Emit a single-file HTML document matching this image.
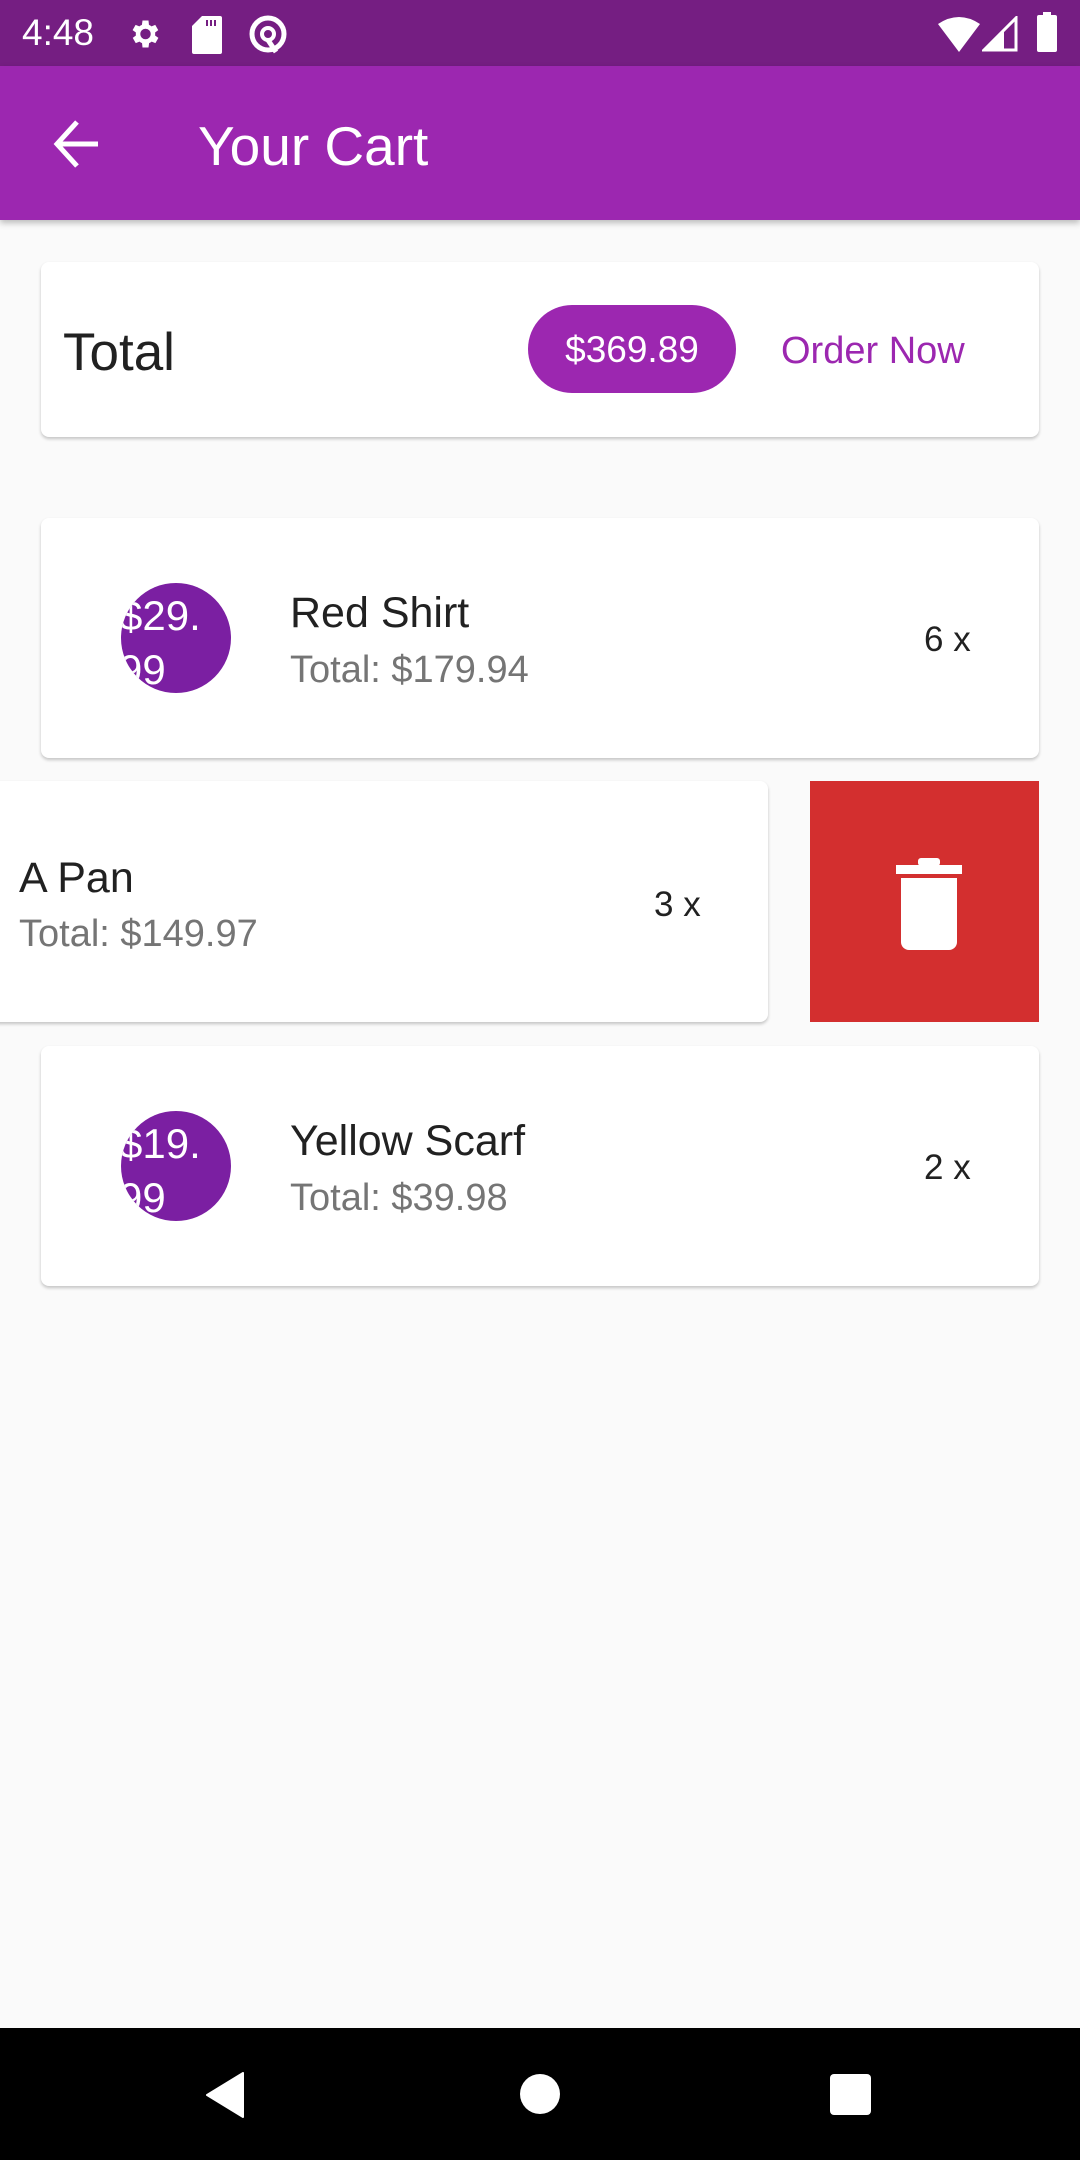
<!DOCTYPE html>
<html><head><meta charset="utf-8"><style>
*{margin:0;padding:0;box-sizing:border-box}
body{width:1080px;height:2160px;background:#fafafa;font-family:"Liberation Sans",sans-serif;position:relative;overflow:hidden}
.abs{position:absolute}
.card{position:absolute;background:#fff;border-radius:8px;box-shadow:0 2px 3px rgba(0,0,0,.22)}
.circ{position:absolute;width:110px;height:110px;border-radius:55px;background:#7b1fa2;overflow:hidden;color:#fff;font-size:42px;line-height:54px}
.name{position:absolute;font-size:43px;color:#212121;white-space:nowrap}
.tot{position:absolute;font-size:38px;color:#757575;white-space:nowrap}
.qty{position:absolute;font-size:35px;color:#212121;white-space:nowrap}
</style></head><body>
<div class="abs" style="left:0;top:0;width:1080px;height:66px;background:#751e82"></div>
<div class="abs" style="left:22px;top:12px;font-size:37px;color:#fff">4:48</div>
<svg class="abs" style="left:126px;top:14px" width="36" height="40" viewBox="0 0 24 24"><path fill="#fff" d="M19.4 13a7.5 7.5 0 000-2l2.1-1.6-2-3.5-2.5 1a7 7 0 00-1.7-1L15 3h-4l-.4 2.9a7 7 0 00-1.7 1l-2.5-1-2 3.5L6.6 11a7.5 7.5 0 000 2l-2.1 1.6 2 3.5 2.5-1a7 7 0 001.7 1L11 21h4l.4-2.9a7 7 0 001.7-1l2.5 1 2-3.5zM13 15.5a3.5 3.5 0 110-7 3.5 3.5 0 010 7z"/></svg>
<svg class="abs" style="left:192px;top:16px" width="30" height="38" viewBox="0 0 15 19"><path fill="#fff" d="M5 0h9a1 1 0 011 1v17a1 1 0 01-1 1H1a1 1 0 01-1-1V5z"/><path fill="#751e82" d="M7 2h1v3H7zM9 2h1v3H9zM11 2h1v3h-1z"/></svg>
<svg class="abs" style="left:248px;top:14px" width="40" height="40" viewBox="0 0 40 40"><circle cx="20" cy="20" r="16" fill="none" stroke="#fff" stroke-width="5"/><circle cx="20" cy="20" r="6" fill="none" stroke="#fff" stroke-width="4"/><path d="M20 26l8 12" stroke="#fff" stroke-width="5"/></svg>
<svg class="abs" style="left:938px;top:16px" width="42" height="36" viewBox="0 0 42 36"><path fill="#fff" d="M0 8Q21-6 42 8L21 36z"/></svg>
<svg class="abs" style="left:982px;top:16px" width="36" height="36" viewBox="0 0 36 36"><path fill="none" stroke="#fff" stroke-width="3" d="M2 34L34 2V34z"/><path fill="#fff" d="M2 34L22 14V34z"/></svg>
<div class="abs" style="left:1037px;top:15px;width:20px;height:37px;background:#fff;border-radius:2px"></div>
<div class="abs" style="left:1043px;top:12px;width:8px;height:4px;background:#fff"></div>
<div class="abs" style="left:0;top:66px;width:1080px;height:154px;background:#9c27b0;box-shadow:0 3px 6px rgba(0,0,0,.25)"></div>
<svg class="abs" style="left:52px;top:119px" width="48" height="50" viewBox="0 0 48 50"><path fill="none" stroke="#fff" stroke-width="5" d="M46 25H6M25 3L5 25l20 22"/></svg>
<div class="abs" style="left:198px;top:114px;font-size:55px;color:#fff">Your Cart</div>
<div class="card" style="left:41px;top:262px;width:998px;height:175px"></div>
<div class="abs" style="left:63px;top:322px;font-size:53px;color:#212121">Total</div>
<div class="abs" style="left:528px;top:305px;width:208px;height:88px;border-radius:44px;background:#9c27b0;color:#fff;font-size:37px;line-height:90px;text-align:center">$369.89</div>
<div class="abs" style="left:781px;top:330px;font-size:38px;color:#9c27b0">Order Now</div>

<div class="card" style="left:41px;top:518px;width:998px;height:240px"></div>
<div class="circ" style="left:121px;top:583px"><div style="margin-left:-2px;padding-top:6px">$29.<br>99</div></div>
<div class="name" style="left:290px;top:589px">Red Shirt</div>
<div class="tot" style="left:290px;top:649px">Total: $179.94</div>
<div class="qty" style="left:924px;top:620px">6 x</div>

<div class="abs" style="left:810px;top:781px;width:229px;height:241px;background:#d32f2f"></div>
<svg class="abs" style="left:896px;top:858px" width="66" height="92" viewBox="0 0 66 92"><rect x="0" y="7" width="66" height="9" fill="#fff"/><rect x="22" y="0" width="22" height="8" rx="3" fill="#fff"/><path fill="#fff" d="M5 20h56v64a8 8 0 01-8 8H13a8 8 0 01-8-8z"/></svg>
<div class="card" style="left:-10px;top:781px;width:778px;height:241px"></div>
<div class="name" style="left:19px;top:854px">A Pan</div>
<div class="tot" style="left:19px;top:913px">Total: $149.97</div>
<div class="qty" style="left:654px;top:885px">3 x</div>

<div class="card" style="left:41px;top:1046px;width:998px;height:240px"></div>
<div class="circ" style="left:121px;top:1111px"><div style="margin-left:-2px;padding-top:6px">$19.<br>99</div></div>
<div class="name" style="left:290px;top:1117px">Yellow Scarf</div>
<div class="tot" style="left:290px;top:1177px">Total: $39.98</div>
<div class="qty" style="left:924px;top:1148px">2 x</div>

<div class="abs" style="left:0;top:2028px;width:1080px;height:132px;background:#000"></div>
<svg class="abs" style="left:205px;top:2072px" width="40" height="46" viewBox="0 0 40 46"><path fill="#fff" d="M38 1V45L2 23z" stroke="#fff" stroke-width="2" stroke-linejoin="round"/></svg>
<div class="abs" style="left:520px;top:2074px;width:40px;height:40px;border-radius:20px;background:#fff"></div>
<div class="abs" style="left:830px;top:2074px;width:41px;height:41px;border-radius:4px;background:#fff"></div>
</body></html>
